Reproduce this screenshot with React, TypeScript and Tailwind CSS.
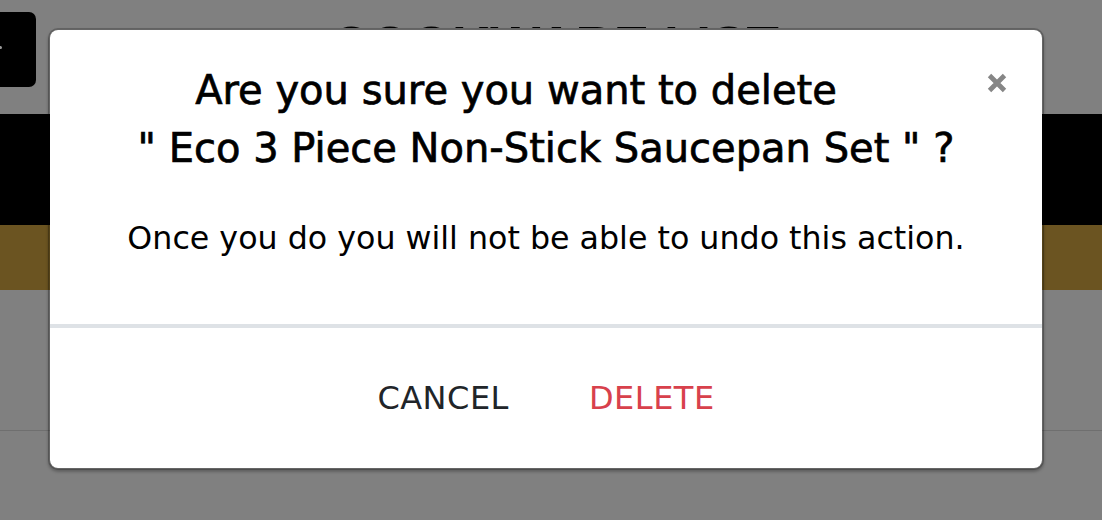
import React from "react";

function CloseIcon() {
  return (
    <svg width="20" height="20" viewBox="0 0 20 20" aria-hidden="true">
      <path d="M2.5 2.5 L17.5 17.5 M17.5 2.5 L2.5 17.5" stroke="#868686" strokeWidth="4.8" strokeLinecap="butt" fill="none" />
    </svg>
  );
}

export default function App() {
  return (
    <div className="relative w-[1102px] h-[520px] overflow-hidden bg-[#808080] font-['DejaVu_Sans',sans-serif]">
      {/* page behind the overlay */}
      <div className="flex flex-col">
        <div className="flex h-[114px]">
          <div className="relative mt-[12px] ml-[-40px] flex h-[75px] w-[76px] shrink-0 items-center justify-end rounded-[7px] bg-black">
            <span className="mr-[34px] mt-[-4px] h-[3px] w-[3px] rounded-full bg-[#9a9a9a]" />
          </div>
          <div className="flex-1 pr-[28px] pt-[25px]">
            <div className="h-[3px] overflow-hidden text-center font-['Liberation_Sans',sans-serif] text-[53px] font-bold leading-[56px] text-black">
              <div className="mt-[-7px]">COOKWARE LIST</div>
            </div>
          </div>
        </div>
        <div className="h-[111px] bg-black" />
        <div className="h-[65px] bg-[#6b5421]" />
        <div className="h-[140px]" />
        <div className="h-px bg-[#6f6f6f]" />
      </div>

      {/* modal */}
      <div className="absolute left-[48px] top-[28px] flex w-[996px] flex-col rounded-[10px] border-2 border-black/20 bg-white bg-clip-padding shadow-[0_2px_3px_rgba(0,0,0,0.25)]">
        <div className="relative flex flex-col items-center px-[40px] pt-[31px] pb-[62px]">
          <h2 className="flex flex-col items-center text-[40px] font-normal leading-[58px] text-black [-webkit-text-stroke:0.7px_#000]">
            <span className="pr-[60px]">Are you sure you want to delete</span>
            <span>" Eco 3 Piece Non-Stick Saucepan Set " ?</span>
          </h2>
          <p className="mt-[37px] text-[31.7px] leading-[48px] text-black">
            Once you do you will not be able to undo this action.
          </p>
          <button className="absolute right-[35px] top-[43px] flex h-[20px] w-[20px] items-center justify-center">
            <CloseIcon />
          </button>
        </div>
        <div className="h-[4px] bg-[#dee2e6]" />
        <div className="flex h-[140px] items-center justify-center gap-[80px]">
          <button className="text-[32px] leading-[48px] tracking-[0.5px] text-[#212529]">CANCEL</button>
          <button className="text-[32px] leading-[48px] tracking-[0.5px] text-[#d8414c]">DELETE</button>
        </div>
      </div>
    </div>
  );
}
